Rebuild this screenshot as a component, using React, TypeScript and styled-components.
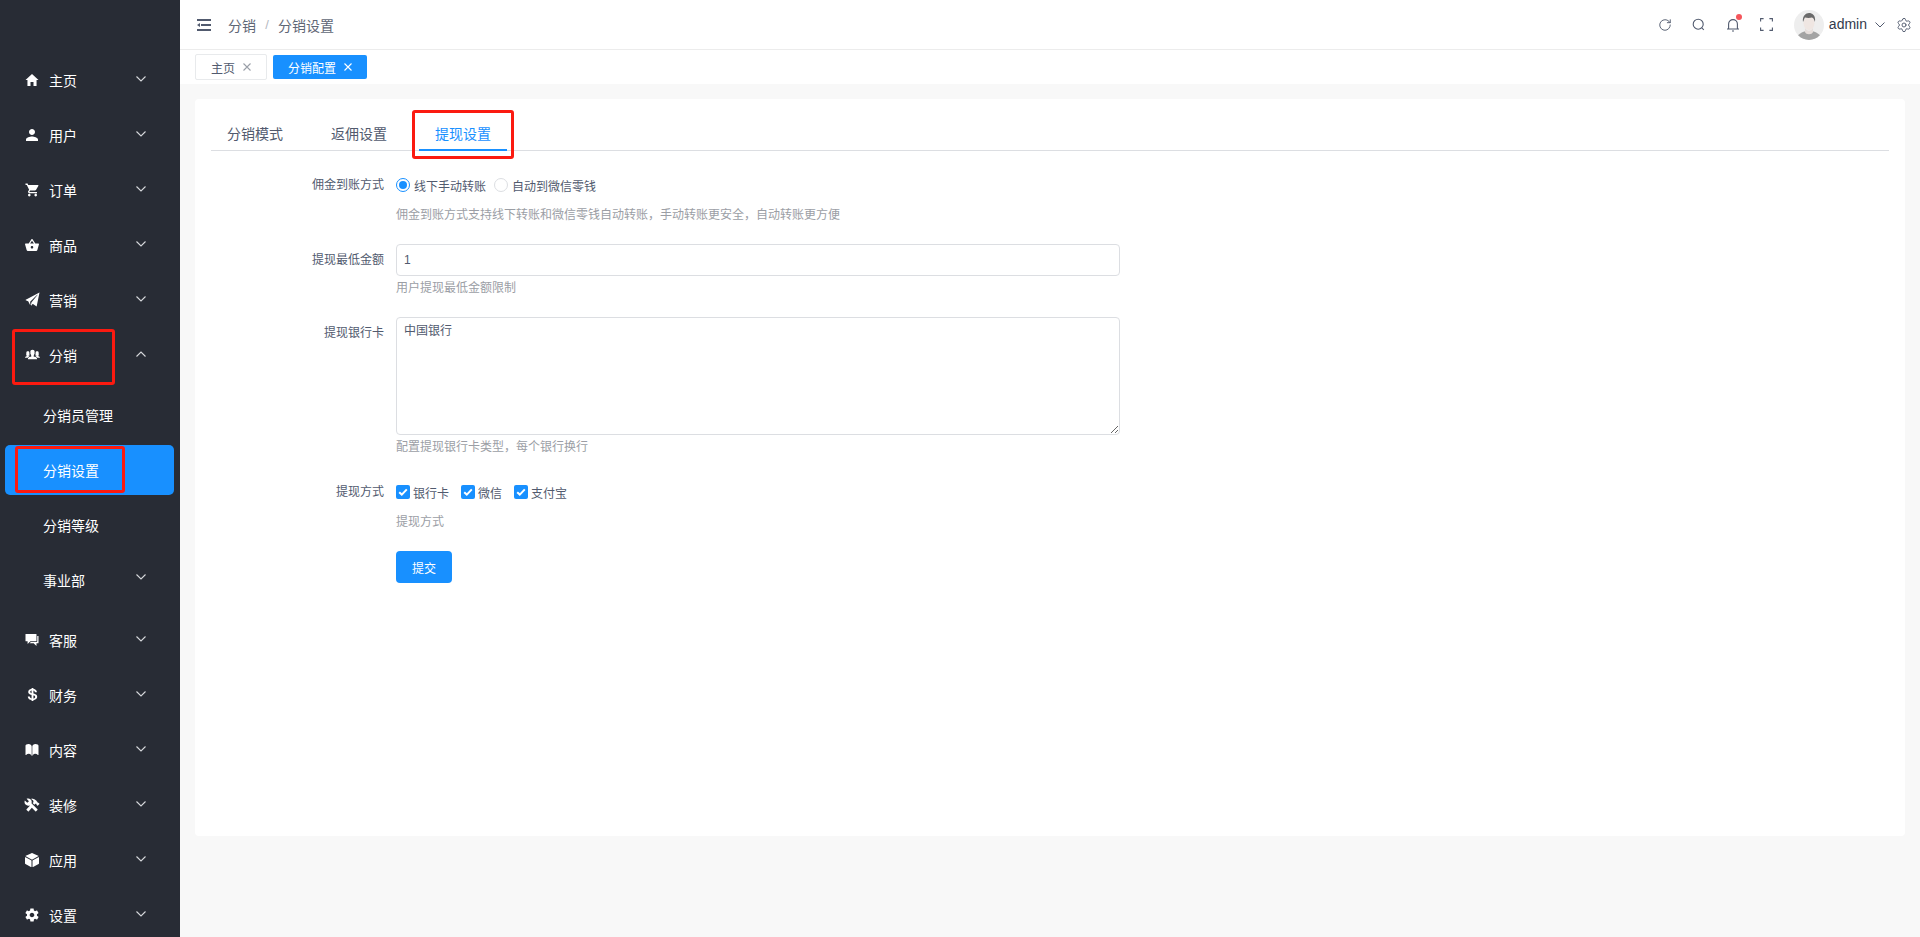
import React from "react";
import styled, { createGlobalStyle } from "styled-components";
import {
  IoMdHome, IoMdPerson, IoMdCart, IoMdBasket, IoIosPaperPlane, IoIosPeople,
  IoMdChatboxes, IoLogoUsd, IoIosBook, IoMdConstruct, IoMdCube, IoMdSettings,
} from "react-icons/io";
import { RotateCw, Settings } from "lucide-react";

const CJK = `"Liberation Sans", "Noto Sans CJK SC", sans-serif`;
const BLUE = "#1890ff";
const TEXT = "#515a6e";

const Global = createGlobalStyle`
  html, body { margin: 0; padding: 0; height: 100%; background: #f8f8f8; }
  body { font-family: ${CJK}; font-size: 12px; color: ${TEXT}; overflow: hidden; }
  * { box-sizing: border-box; }
`;

const Page = styled.div`display: flex; width: 1920px; height: 937px; overflow: hidden;`;
const Sidebar = styled.nav`
  width: 180px; height: 937px; flex: none; background: #282c35; padding-top: 54px; overflow: hidden;
`;
const MenuItem = styled.div`
  position: relative; display: flex; align-items: center; height: 55px; padding-left: 25px; padding-right: 34px;
  color: #fff; font-size: 14px;
`;
const MenuIcon = styled.span`
  width: 14px; margin-right: 10px; margin-top: -4px; display: flex; justify-content: center; align-items: center;
  svg { flex: none; display: block; }
`;
const MenuText = styled.span`flex: 1; margin-top: -4px;`;
const SubText = styled.span`flex: 1;`;
const Chevron = styled.svg`width: 10px; height: 6px; margin-top: -6px; flex: none;`;
const SubMenu = styled.div`padding: 6px 0 9px; display: flex; flex-direction: column; gap: 5px;`;
const SubItem = styled.div<{ $active?: boolean }>`
  position: relative; display: flex; align-items: center; height: 50px; margin: 0 6px 0 5px;
  padding-left: 38px; padding-right: 28px; font-size: 14px; color: #fff; border-radius: 5px;
  background: ${(p) => (p.$active ? BLUE : "transparent")};
`;
const Annotation = styled.div<{ $l: number; $t: number; $w: number; $h: number }>`
  position: absolute; left: ${(p) => p.$l}px; top: ${(p) => p.$t}px; width: ${(p) => p.$w}px; height: ${(p) => p.$h}px;
  border: 3px solid #fb1a10; border-radius: 3px; pointer-events: none;
`;

const Main = styled.div`flex: 1; min-width: 0; display: flex; flex-direction: column;`;
const Header = styled.header`
  height: 50px; flex: none; background: #fff; border-bottom: 1px solid #ececec; display: flex; align-items: center;
  padding-left: 17px; color: ${TEXT};
`;
const Crumbs = styled.div`display: flex; align-items: center; margin-left: 17px; font-size: 14px; color: #5f6776; flex: 1;`;
const CrumbSep = styled.span`margin: 0 8px; color: #b5b9c2; width: 6px; text-align: center; font-size: 13px;`;
const HeaderTools = styled.div`display: flex; align-items: center; height: 50px;`;
const ToolSlot = styled.div`
  position: relative; width: 34px; height: 50px; display: flex; align-items: center; justify-content: center;
`;
const RedDot = styled.i`
  position: absolute; width: 6px; height: 6px; border-radius: 50%; background: #f5555b; top: 14px; left: 20px;
`;
const Avatar = styled.svg`width: 30px; height: 30px; margin-left: 10px; border-radius: 50%; flex: none;`;
const UserName = styled.span`
  font-family: "Liberation Sans", sans-serif; font-size: 14px; color: #333a4c; margin-left: 5px; margin-top: -2px;
`;
const UserCaret = styled.svg`width: 10px; height: 6px; margin-left: 8px; flex: none;`;
const GearSlot = styled.div`width: 16px; margin-left: 11px; margin-right: 8px; display: flex; justify-content: center;`;

const TagBar = styled.div`
  height: 34px; flex: none; background: #fff; padding-left: 15px; display: flex; align-items: center; gap: 6px;
`;
const Tag = styled.div<{ $active?: boolean }>`
  display: flex; align-items: center; font-size: 12px; border-radius: 2px;
  height: ${(p) => (p.$active ? 24 : 26)}px; padding: ${(p) => (p.$active ? "0 15px 0 15px" : "0 15px 0 15px")};
  background: ${(p) => (p.$active ? BLUE : "#fff")};
  color: ${(p) => (p.$active ? "#fff" : "#515a6e")};
  border: ${(p) => (p.$active ? "none" : "1px solid #e8eaec")};
  svg { margin-left: 8px; color: ${(p) => (p.$active ? "#fff" : "#9a9fa8")}; flex: none; }
`;

const Card = styled.section`
  margin: 15px 15px 0; height: 737px; background: #fff; border-radius: 4px; padding: 0 16px;
`;
const Tabs = styled.div`
  position: relative; height: 52px; border-bottom: 1px solid #dcdee2; display: flex; padding-top: 20px; gap: 16px;
`;
const TabItem = styled.div<{ $active?: boolean }>`
  position: relative; height: 32px; padding: 5px 16px 0; font-size: 14px; line-height: 20px;
  color: ${(p) => (p.$active ? BLUE : TEXT)};
  border-bottom: 2px solid ${(p) => (p.$active ? BLUE : "transparent")};
`;
const Form = styled.form`padding-top: 18px;`;
const FormItem = styled.div`display: flex; margin-bottom: 20px;`;
const Label = styled.label`
  width: 185px; flex: none; text-align: right; padding-right: 12px; line-height: 32px; font-size: 12px; color: ${TEXT};
`;
const Field = styled.div`width: 724px;`;
const OptionRow = styled.div`display: flex; align-items: center; height: 34px; padding-bottom: 2px;`;
const Radio = styled.span<{ $on?: boolean }>`
  width: 14px; height: 14px; border-radius: 50%; flex: none; margin-right: 4px; background: #fff;
  border: 1px solid ${(p) => (p.$on ? BLUE : "#dcdee2")};
  display: flex; align-items: center; justify-content: center;
  &::after { content: ""; width: 8px; height: 8px; border-radius: 50%; background: ${(p) => (p.$on ? BLUE : "transparent")}; }
`;
const OptionText = styled.span<{ $gap: number }>`font-size: 12px; color: ${TEXT}; margin-right: ${(p) => p.$gap}px;`;
const Check = styled.span`
  width: 14px; height: 14px; border-radius: 2px; background: ${BLUE}; flex: none; margin-right: 3px;
  display: flex; align-items: center; justify-content: center;
`;
const Hint = styled.div`margin-top: 1px; line-height: 22px; height: 20px; font-size: 12px; color: #9b9ea5;`;
const TextInput = styled.input`
  display: block; width: 100%; height: 32px; border: 1px solid #dcdee2; border-radius: 4px; padding: 0 7px;
  font: 12px ${CJK}; color: ${TEXT}; background: #fff; outline: none;
`;
const TextArea = styled.textarea`
  display: block; width: 100%; height: 118px; border: 1px solid #dcdee2; border-radius: 4px; padding: 4px 7px;
  font: 12px/1.5 ${CJK}; color: ${TEXT}; background: #fff; outline: none; resize: vertical;
`;
const Submit = styled.button`
  display: block; margin-left: 185px; width: 56px; height: 32px; border: none; border-radius: 4px; background: ${BLUE};
  color: #fff; font: 12px ${CJK}; padding: 0;
`;

const ChevronIcon = ({ up }: { up?: boolean }) => (
  <Chevron viewBox="0 0 10 6" fill="none" stroke="#d7d9dc" strokeWidth="1.1">
    <path d={up ? "M.5 5.5 5 1l4.5 4.5" : "M.5.5 5 5 9.5.5"} />
  </Chevron>
);

const CloseX = () => (
  <svg width="8" height="8" viewBox="0 0 8 8" fill="none" stroke="currentColor" strokeWidth="1.1"><path d="M.5.5l7 7M7.500.5l-7 7" /></svg>
);

const items = [
  { name: "主页", Icon: IoMdHome, size: 16 },
  { name: "用户", Icon: IoMdPerson, size: 16 },
  { name: "订单", Icon: IoMdCart, size: 16 },
  { name: "商品", Icon: IoMdBasket, size: 16 },
  { name: "营销", Icon: IoIosPaperPlane, size: 17 },
];
const tail = [
  { name: "客服", Icon: IoMdChatboxes, size: 16 },
  { name: "财务", Icon: IoLogoUsd, size: 15 },
  { name: "内容", Icon: IoIosBook, size: 16 },
  { name: "装修", Icon: IoMdConstruct, size: 16 },
  { name: "应用", Icon: IoMdCube, size: 16 },
  { name: "设置", Icon: IoMdSettings, size: 16 },
];

const Entry = ({ name, Icon, size }: { name: string; Icon: React.ComponentType<{ size?: number }>; size: number }) => (
  <MenuItem>
    <MenuIcon><Icon size={size} /></MenuIcon>
    <MenuText>{name}</MenuText>
    <ChevronIcon />
  </MenuItem>
);

const CheckMark = () => (
  <svg width="10" height="8" viewBox="0 0 10 8" fill="none" stroke="#fff" strokeWidth="2"><path d="M1.2 4.2 3.8 6.6 8.8 1.4" /></svg>
);

export default function App() {
  return (
    <Page>
      <Global />
      <Sidebar>
        {items.map((i) => <Entry key={i.name} {...i} />)}
        <MenuItem>
          <MenuIcon><IoIosPeople size={17} /></MenuIcon>
          <MenuText>分销</MenuText>
          <ChevronIcon up />
          <Annotation $l={12} $t={0} $w={103} $h={56} />
        </MenuItem>
        <SubMenu>
          <SubItem>分销员管理</SubItem>
          <SubItem $active>分销设置<Annotation $l={10} $t={1} $w={110} $h={47} /></SubItem>
          <SubItem>分销等级</SubItem>
          <SubItem><SubText>事业部</SubText><ChevronIcon /></SubItem>
        </SubMenu>
        {tail.map((i) => <Entry key={i.name} {...i} />)}
      </Sidebar>
      <Main>
        <Header>
          <svg width="14" height="12" viewBox="0 0 14 12" fill="#515a6e">
            <rect x="0" y="0" width="14" height="2" /><rect x="4" y="5" width="10" height="2" />
            <rect x="0" y="10" width="14" height="2" /><path d="M0 6l3-2v4z" />
          </svg>
          <Crumbs>分销<CrumbSep>/</CrumbSep>分销设置</Crumbs>
          <HeaderTools>
            <ToolSlot><RotateCw size={14} strokeWidth={1.6} color="#515a6e" /></ToolSlot>
            <ToolSlot>
              <svg width="13" height="13" viewBox="0 0 13 13" fill="none" stroke="#515a6e" strokeWidth="1.1">
                <circle cx="6.2" cy="6.2" r="5" /><path d="M9.8 9.8l2 2" />
              </svg>
            </ToolSlot>
            <ToolSlot>
              <svg width="14" height="15" viewBox="0 0 14 15" fill="none" stroke="#515a6e" strokeWidth="1.1">
                <path d="M1 12h12M2.6 12V7a4.4 4.4 0 0 1 8.8 0v5M6 14h2" />
              </svg>
              <RedDot />
            </ToolSlot>
            <ToolSlot>
              <svg width="13" height="13" viewBox="0 0 13 13" fill="none" stroke="#515a6e" strokeWidth="1.1">
                <path d="M.6 3.6V.6h3M9.4.6h3v3M12.4 9.4v3h-3M3.6 12.4h-3v-3" />
              </svg>
            </ToolSlot>
            <Avatar viewBox="0 0 30 30">
              <rect width="30" height="30" fill="#eeeeee" />
              <path d="M2 30c1-6 6-8 10-9h6c4 1 9 3 10 9z" fill="#a3a3a3" />
              <path d="M11 17c1 5 7 5 8 0v5c-1 3-7 3-8 0z" fill="#e6dedb" />
              <ellipse cx="15" cy="13" rx="5.5" ry="7" fill="#efe6e2" />
              <path d="M9 12c-1-6 3-9 6-9s7 2 6 9c-1-2-1-4-3-4.500-2 .5-5 .5-7 0-1 1-1 3-2 4.500z" fill="#6a6a6a" />
            </Avatar>
            <UserName>admin</UserName>
            <UserCaret viewBox="0 0 10 6" fill="none" stroke="#515a6e" strokeWidth="1"><path d="M.5.5 5 5 9.500.5" /></UserCaret>
            <GearSlot><Settings size={16} strokeWidth={1.4} color="#515a6e" /></GearSlot>
          </HeaderTools>
        </Header>
        <TagBar>
          <Tag>主页<CloseX /></Tag>
          <Tag $active>分销配置<CloseX /></Tag>
        </TagBar>
        <Card>
          <Tabs>
            <TabItem>分销模式</TabItem>
            <TabItem>返佣设置</TabItem>
            <TabItem $active>提现设置</TabItem>
            <Annotation $l={201} $t={11} $w={102} $h={49} />
          </Tabs>
          <Form>
            <FormItem>
              <Label>佣金到账方式</Label>
              <Field>
                <OptionRow>
                  <Radio $on /><OptionText $gap={8}>线下手动转账</OptionText>
                  <Radio /><OptionText $gap={0}>自动到微信零钱</OptionText>
                </OptionRow>
                <Hint>佣金到账方式支持线下转账和微信零钱自动转账，手动转账更安全，自动转账更方便</Hint>
              </Field>
            </FormItem>
            <FormItem>
              <Label>提现最低金额</Label>
              <Field>
                <TextInput defaultValue="1" />
                <Hint>用户提现最低金额限制</Hint>
              </Field>
            </FormItem>
            <FormItem>
              <Label>提现银行卡</Label>
              <Field>
                <TextArea defaultValue="中国银行" />
                <Hint>配置提现银行卡类型，每个银行换行</Hint>
              </Field>
            </FormItem>
            <FormItem>
              <Label>提现方式</Label>
              <Field>
                <OptionRow>
                  <Check><CheckMark /></Check><OptionText $gap={12}>银行卡</OptionText>
                  <Check><CheckMark /></Check><OptionText $gap={12}>微信</OptionText>
                  <Check><CheckMark /></Check><OptionText $gap={0}>支付宝</OptionText>
                </OptionRow>
                <Hint>提现方式</Hint>
              </Field>
            </FormItem>
            <Submit type="button">提交</Submit>
          </Form>
        </Card>
      </Main>
    </Page>
  );
}
